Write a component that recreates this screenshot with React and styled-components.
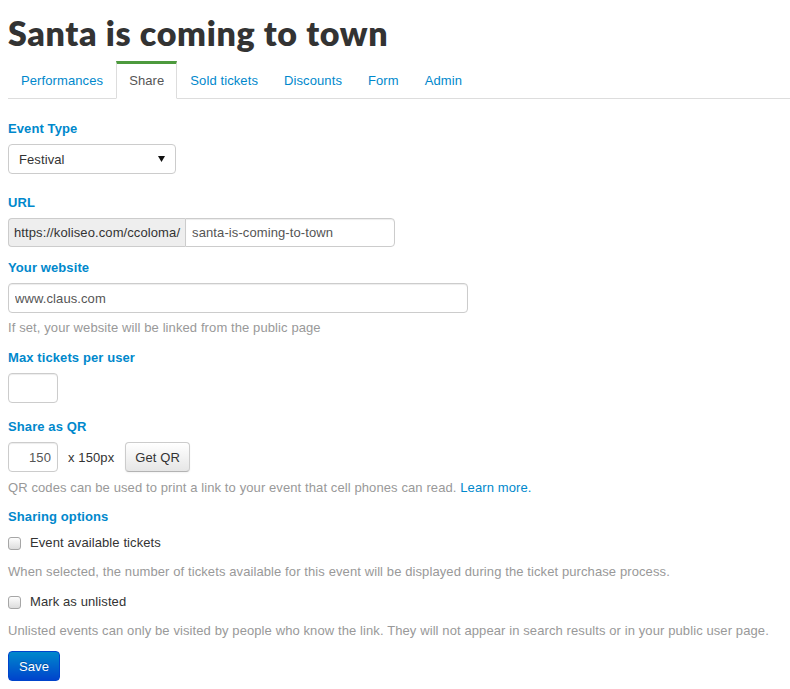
import styled, { createGlobalStyle } from "styled-components"

const Global = createGlobalStyle`
    body {
        margin: 0;
        background: #ffffff;
        font-family: "Liberation Sans", Arial, sans-serif;
        font-size: 13px;
        letter-spacing: 0.1px;
        color: #333333;
    }
`

const tabs = ["Performances", "Share", "Sold tickets", "Discounts", "Form", "Admin"]

const App = () => {
    return (
        <Page>
            <Global />
            <Title>Santa is coming to town</Title>

            <Tabs>
                {tabs.map((t) => (
                    <Tab key={t} $active={t === "Share"}>{t}</Tab>
                ))}
            </Tabs>

            <Form>
                <Label>Event Type</Label>
                <SelectBox>
                    <span>Festival</span>
                    <svg width="7" height="6" viewBox="0 0 7 6">
                        <path d="M0 0 H7 L3.5 6 Z" fill="#111" />
                    </svg>
                </SelectBox>

                <Label $top={19}>URL</Label>
                <InputGroup>
                    <AddOn>https://koliseo.com/ccoloma/</AddOn>
                    <Input $width={210} $height={29} $left defaultValue="santa-is-coming-to-town" />
                </InputGroup>

                <Label $top={11}>Your website</Label>
                <Input $width={460} defaultValue="www.claus.com" />
                <Help $top={5}>If set, your website will be linked from the public page</Help>

                <Label $top={10}>Max tickets per user</Label>
                <Input $width={50} />

                <Label $top={14}>Share as QR</Label>
                <QrRow>
                    <Input $width={50} $right defaultValue="150" />
                    <Suffix>x 150px</Suffix>
                    <Button>Get QR</Button>
                </QrRow>
                <Help $top={6}>
                    QR codes can be used to print a link to your event that cell phones can read.{" "}
                    <Link href="#">Learn more.</Link>
                </Help>

                <Label $top={9}>Sharing options</Label>
                <CheckRow $top={1}>
                    <Box type="checkbox" />
                    Event available tickets
                </CheckRow>
                <Help $top={9}>
                    When selected, the number of tickets available for this event will be displayed during the ticket purchase process.
                </Help>
                <CheckRow $top={10}>
                    <Box type="checkbox" />
                    Mark as unlisted
                </CheckRow>
                <Help $top={9}>
                    Unlisted events can only be visited by people who know the link. They will not appear in search results or in your public user page.
                </Help>

                <SaveBtn>Save</SaveBtn>
            </Form>
        </Page>
    )
}

// Styles
const Page = styled.div`
    padding: 13px 0 0 8px;
    width: 782px;
`
const Title = styled.h1`
    margin: 0;
    font-family: "Lato", sans-serif;
    font-weight: 800;
    font-size: 34px;
    line-height: 40px;
    color: #333333;
    letter-spacing: 0.65px;
`
const Tabs = styled.div`
    display: flex;
    margin-top: 8px;
    border-bottom: 1px solid #dddddd;
`
const Tab = styled.a`
    padding: 7px 12px;
    line-height: 20px;
    border: 1px solid transparent;
    border-top: 3px solid transparent;
    border-bottom: 0;
    margin-bottom: -1px;
    color: #0088cc;
    font-size: 13px;
    cursor: pointer;
    ${(p) => p.$active && `
        background: #ffffff;
        color: #555555;
        border-color: #dddddd;
        border-top-color: #4d9a3d;
        border-bottom: 1px solid #ffffff;
    `}
`
const Form = styled.div`
    display: flex;
    flex-direction: column;
    align-items: flex-start;
    padding-top: 20px;
`
const Label = styled.label`
    display: block;
    margin-top: ${(p) => p.$top || 0}px;
    margin-bottom: 5px;
    line-height: 20px;
    font-weight: bold;
    font-size: 13px;
    color: #0088cc;
`
const SelectBox = styled.div`
    box-sizing: border-box;
    width: 168px;
    height: 30px;
    display: flex;
    align-items: center;
    justify-content: space-between;
    padding: 0 10px 0 10px;
    border: 1px solid #cccccc;
    border-radius: 4px;
    color: #333333;
    background: #ffffff;
`
const InputGroup = styled.div`
    display: flex;
`
const AddOn = styled.span`
    box-sizing: border-box;
    height: 29px;
    display: flex;
    align-items: center;
    padding: 0 5px 0 5px;
    background: #eeeeee;
    border: 1px solid #cccccc;
    border-right: 0;
    border-radius: 4px 0 0 4px;
    color: #333333;
`
const Input = styled.input`
    box-sizing: border-box;
    width: ${(p) => p.$width}px;
    height: ${(p) => p.$height || 30}px;
    padding: 0 6px;
    border: 1px solid #cccccc;
    border-radius: ${(p) => (p.$left ? "0 4px 4px 0" : "4px")};
    font-family: "Liberation Sans", Arial, sans-serif;
    font-size: 13px;
    letter-spacing: 0.1px;
    color: #555555;
    text-align: ${(p) => (p.$right ? "right" : "left")};
    box-shadow: inset 0 1px 1px rgba(0, 0, 0, 0.075);
    outline: none;
`
const QrRow = styled.div`
    display: flex;
    align-items: center;
`
const Suffix = styled.span`
    margin: 0 11px 0 10px;
    color: #333333;
`
const Button = styled.button`
    box-sizing: border-box;
    height: 30px;
    padding: 0 9px;
    font-family: "Liberation Sans", Arial, sans-serif;
    font-size: 13px;
    letter-spacing: 0.1px;
    color: #333333;
    background: linear-gradient(#ffffff, #e6e6e6);
    border: 1px solid #cccccc;
    border-bottom-color: #b3b3b3;
    border-radius: 4px;
    box-shadow: inset 0 1px 0 rgba(255, 255, 255, 0.2), 0 1px 2px rgba(0, 0, 0, 0.05);
`
const Help = styled.p`
    margin: ${(p) => p.$top || 0}px 0 0;
    line-height: 20px;
    color: #999999;
`
const Link = styled.a`
    color: #0088cc;
    text-decoration: none;
`
const CheckRow = styled.label`
    display: flex;
    align-items: center;
    gap: 9px;
    margin-top: ${(p) => p.$top || 0}px;
    line-height: 20px;
    color: #333333;
`
const Box = styled.input`
    appearance: none;
    margin: 0;
    width: 13px;
    height: 13px;
    border: 1px solid #a6a6a6;
    border-radius: 3px;
    background: linear-gradient(#fdfdfd, #dcdcdc);
    box-sizing: border-box;
`
const SaveBtn = styled.button`
    margin-top: 10px;
    box-sizing: border-box;
    height: 30px;
    padding: 0 10px;
    font-family: "Liberation Sans", Arial, sans-serif;
    font-size: 13px;
    letter-spacing: 0.1px;
    color: #ffffff;
    background: linear-gradient(#0088cc, #0044cc);
    border: 1px solid #0044cc;
    border-radius: 4px;
    text-shadow: 0 -1px 0 rgba(0, 0, 0, 0.25);
`

export default App
